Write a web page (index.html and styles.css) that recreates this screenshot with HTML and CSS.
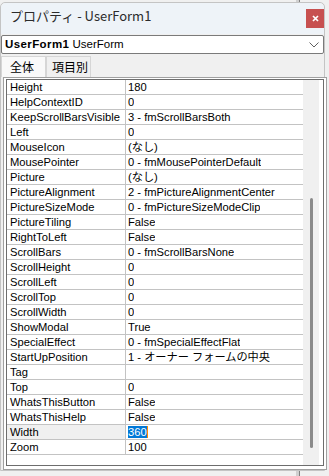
FILE: index.html
```html
<!DOCTYPE html>
<html lang="ja">
<head>
<meta charset="utf-8">
<title>プロパティ - UserForm1</title>
<link rel="stylesheet" href="styles.css">
</head>
<body>
<div class="behind"></div>
<div class="window">
  <div class="titlebar">
    <span class="title">プロパティ - UserForm1</span>
    <span class="close"><svg width="7" height="7" viewBox="0 0 7 7"><path d="M1 1L6 6M6 1L1 6" stroke="#fff" stroke-width="1.7" fill="none"/></svg></span>
  </div>
  <div class="combo">
    <span class="combo-text"><b>UserForm1</b> UserForm</span>
    <svg class="chev" width="10" height="6" viewBox="0 0 10 6"><path d="M0.5 0.5L5 5L9.5 0.5" stroke="#606060" stroke-width="1" fill="none"/></svg>
  </div>
  <div class="tabs">
    <span class="tab active">全体</span>
    <span class="tab">項目別</span>
  </div>
  <div class="frame">
    <div class="frame-inner">
      <div class="list">
        <div class="row"><span class="name">Height</span><span class="val">180</span></div>
        <div class="row"><span class="name">HelpContextID</span><span class="val">0</span></div>
        <div class="row"><span class="name">KeepScrollBarsVisible</span><span class="val">3 - fmScrollBarsBoth</span></div>
        <div class="row"><span class="name">Left</span><span class="val">0</span></div>
        <div class="row"><span class="name">MouseIcon</span><span class="val">(なし)</span></div>
        <div class="row"><span class="name">MousePointer</span><span class="val">0 - fmMousePointerDefault</span></div>
        <div class="row"><span class="name">Picture</span><span class="val">(なし)</span></div>
        <div class="row"><span class="name">PictureAlignment</span><span class="val">2 - fmPictureAlignmentCenter</span></div>
        <div class="row"><span class="name">PictureSizeMode</span><span class="val">0 - fmPictureSizeModeClip</span></div>
        <div class="row"><span class="name">PictureTiling</span><span class="val">False</span></div>
        <div class="row"><span class="name">RightToLeft</span><span class="val">False</span></div>
        <div class="row"><span class="name">ScrollBars</span><span class="val">0 - fmScrollBarsNone</span></div>
        <div class="row"><span class="name">ScrollHeight</span><span class="val">0</span></div>
        <div class="row"><span class="name">ScrollLeft</span><span class="val">0</span></div>
        <div class="row"><span class="name">ScrollTop</span><span class="val">0</span></div>
        <div class="row"><span class="name">ScrollWidth</span><span class="val">0</span></div>
        <div class="row"><span class="name">ShowModal</span><span class="val">True</span></div>
        <div class="row"><span class="name">SpecialEffect</span><span class="val">0 - fmSpecialEffectFlat</span></div>
        <div class="row"><span class="name">StartUpPosition</span><span class="val">1 - オーナー フォームの中央</span></div>
        <div class="row"><span class="name">Tag</span><span class="val"></span></div>
        <div class="row"><span class="name">Top</span><span class="val">0</span></div>
        <div class="row"><span class="name">WhatsThisButton</span><span class="val">False</span></div>
        <div class="row"><span class="name">WhatsThisHelp</span><span class="val">False</span></div>
        <div class="row selected"><span class="name">Width</span><span class="val"><span class="hl">360</span><span class="caret"></span></span></div>
        <div class="row"><span class="name">Zoom</span><span class="val">100</span></div>
      </div>
      <div class="scrollbar"><div class="thumb"></div></div>
    </div>
  </div>
</div>
</body>
</html>
```

FILE: styles.css
```css
html, body {
  margin: 0;
  padding: 0;
}
body {
  width: 329px;
  height: 476px;
  overflow: hidden;
  background: #f0f0f0;
  position: relative;
  font-family: "Liberation Sans", "Noto Sans CJK JP", sans-serif;
  color: #000;
}
.behind {
  position: absolute;
  left: 296px;
  top: 0;
  width: 3px;
  height: 476px;
  background: #d0d0d0;
  border-right: 1px solid #808080;
}
.window {
  position: relative;
  margin-top: 2px;
  width: 323px;
  height: 467px;
  border: 1px solid #c4c4c4;
  border-radius: 5px 5px 0 0;
  background: #f0f0f0;
  display: flex;
  flex-direction: column;
}
.titlebar {
  height: 31px;
  background: #eef3f8;
  border-radius: 5px 5px 0 0;
  display: flex;
  align-items: flex-start;
}
.title {
  font-family: "Noto Sans CJK JP", sans-serif;
  font-size: 13px;
  line-height: 16px;
  margin: 5px 0 0 9px;
  color: #2b2b2b;
}
.close {
  margin-left: auto;
  margin-top: 6px;
  width: 18px;
  height: 19px;
  background: #c75050;
  display: flex;
  align-items: center;
  justify-content: center;
}
.combo {
  margin-top: 1px;
  height: 17px;
  border: 1px solid #7a7a7a;
  border-radius: 2px;
  background: #fff;
  display: flex;
  align-items: center;
  padding-left: 3px;
  padding-right: 4px;
}
.combo-text {
  font-size: 11.5px;
  line-height: 17px;
  white-space: nowrap;
}
.combo-text b {
  letter-spacing: 0.4px;
}
.chev {
  margin-left: auto;
}
.tabs {
  margin-top: 2px;
  height: 21px;
  display: flex;
}
.tab {
  box-sizing: border-box;
  width: 45px;
  height: 21px;
  border: 1px solid #d6d6d6;
  border-bottom: none;
  font-family: "Noto Sans CJK JP", sans-serif;
  font-size: 12px;
  line-height: 19px;
  padding-left: 5px;
  background: #f0f0f0;
}
.tab.active {
  background: #f9f9f9;
  padding-left: 8px;
}
.frame {
  margin-left: 2px;
  width: 318px;
  border: 1px solid #a0a0a0;
  background: #fff;
  padding: 1px 2px 3px 2px;
  box-sizing: content-box;
  height: 387px;
}
.frame-inner {
  border: 1px solid #6d6d6d;
  height: 385px;
  display: flex;
  background: #fff;
}
.list {
  width: 296px;
  display: flex;
  flex-direction: column;
}
.row {
  height: 14px;
  border-bottom: 1px solid #c3c3c3;
  display: flex;
  font-size: 11.2px;
  line-height: 14px;
  white-space: nowrap;
}
.name {
  width: 115px;
  padding-left: 3px;
  border-right: 1px solid #c3c3c3;
  overflow: hidden;
}
.val {
  padding-left: 2px;
  overflow: hidden;
  display: flex;
  align-items: flex-start;
}
.selected .name {
  background: #f0f0f0;
}
.hl {
  background: #0078d7;
  color: #fff;
  margin-top: 1px;
  line-height: 12px;
  height: 12px;
}
.caret {
  width: 1px;
  height: 12px;
  margin-top: 1px;
  background: #ff8a00;
}
.scrollbar {
  width: 16px;
  background: #f0f0f0;
  padding-top: 118px;
  box-sizing: border-box;
}
.thumb {
  margin-left: 7px;
  width: 3px;
  height: 250px;
  border-radius: 2px;
  background: #8a8a8a;
}
```
